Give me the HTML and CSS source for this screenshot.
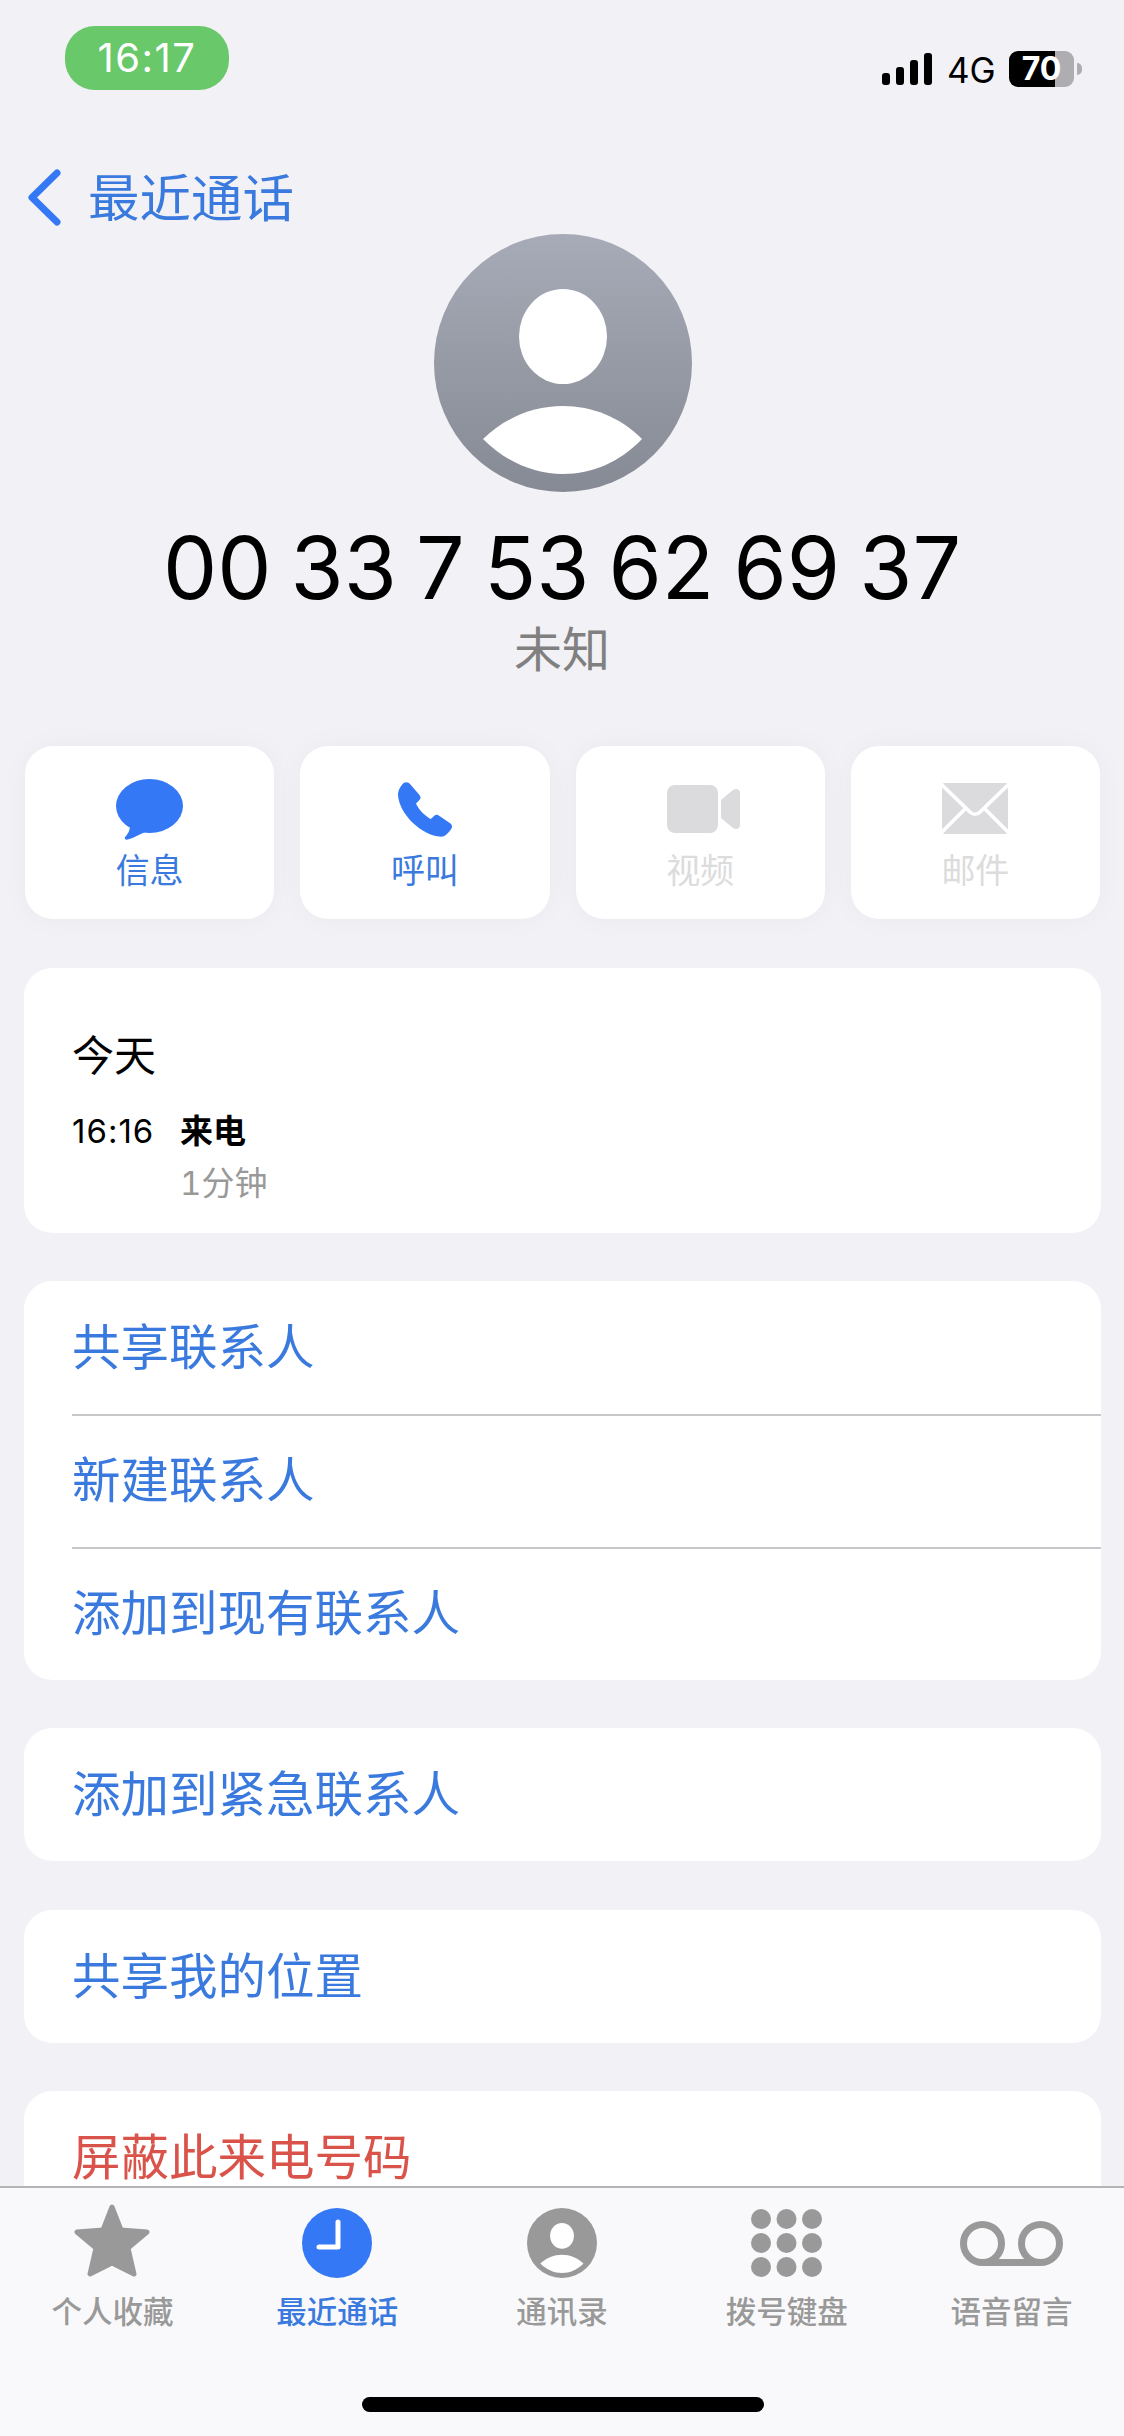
FILE: index.html
```html
<!DOCTYPE html>
<html lang="zh-CN">
<head>
<meta charset="utf-8">
<title>最近通话</title>
<link rel="stylesheet" href="styles.css">
</head>
<body>
<div class="screen">
  <header class="status">
    <div class="time-pill">16:17</div>
    <div class="status-right">
      <div class="signal"><i class="bar b1"></i><i class="bar b2"></i><i class="bar b3"></i><i class="bar b4"></i></div>
      <span class="net">4G</span>
      <div class="battery">70</div>
    </div>
  </header>
  <nav class="nav">
    <svg class="chevron" viewBox="0 0 34 57"><path d="M30 4 L5 28.5 L30 53" fill="none" stroke="#3478f6" stroke-width="7" stroke-linecap="round" stroke-linejoin="round"/></svg>
    <span class="nav-title">最近通话</span>
  </nav>
  <div class="avatar-wrap">
    <svg class="avatar" viewBox="0 0 258 258">
      <defs><linearGradient id="ag" x1="0" y1="0" x2="0" y2="1"><stop offset="0" stop-color="#a7abb7"/><stop offset="1" stop-color="#868a94"/></linearGradient></defs>
      <circle cx="129" cy="129" r="129" fill="url(#ag)"/>
      <ellipse cx="129" cy="102.5" rx="44" ry="47.5" fill="#fff"/>
      <path d="M49 205 C72 183 100 172 129 172 C158 172 186 183 208 205 C186 228 158 240 129 240 C100 240 72 228 49 205 Z" fill="#fff"/>
    </svg>
  </div>
  <h1 class="number">00 33 7 53 62 69 37</h1>
  <div class="sub">未知</div>
  <section class="actions">
    <div class="action">
      <svg class="ai ai-msg" viewBox="0 0 67 61"><ellipse cx="33.5" cy="27" rx="33.5" ry="27" fill="#3478f6"/><path d="M14 47 C14 52 11 56 9 58 C8 60 10 61 12 60.5 C18 59 24 55 31 52 Z" fill="#3478f6"/></svg>
      <span class="al">信息</span>
    </div>
    <div class="action">
      <svg class="ai ai-phone" viewBox="0 0 54 55"><path d="M6 .8 C8.5 -.5 10.5 .3 12 2 L21.5 13 C23 15 22.8 16.5 21 18.5 L18 21.5 C20 27 27 34 32.8 37 L36 34 C37.8 32.4 39.5 32.6 41.5 34 L52.5 41.5 C54.5 43.2 54.5 45.5 52.8 47.5 C50 51.5 47 54.7 43 54.7 C24 54 1 32 0 13 C0 8 3 3.5 6 .8 Z" fill="#3478f6"/></svg>
      <span class="al">呼叫</span>
    </div>
    <div class="action off">
      <svg class="ai ai-video" viewBox="0 0 73 48"><rect x="0" y="0" width="51" height="48" rx="8" fill="#dbdbdd"/><path d="M54 15 L66 5 C69 3 73 4 73 8 L73 40 C73 44 69 45 66 43 L54 33 Z" fill="#dbdbdd"/></svg>
      <span class="al">视频</span>
    </div>
    <div class="action off">
      <svg class="ai ai-mail" viewBox="0 0 66 51"><rect width="66" height="51" rx="3" fill="#dbdbdd"/><path d="M-1 1 L28 29 C31 32 35 32 38 29 L67 1 M-1 50 L23 26 M67 50 L43 26" fill="none" stroke="#fff" stroke-width="3.6"/></svg>
      <span class="al">邮件</span>
    </div>
  </section>
  <section class="card log">
    <div class="log-day">今天</div>
    <div class="log-row">
      <span class="log-time">16:16</span>
      <div class="log-info">
        <div class="log-type">来电</div>
        <div class="log-dur">1分钟</div>
      </div>
    </div>
  </section>
  <section class="card contact-list">
    <div class="row blue">共享联系人</div>
    <div class="row blue">新建联系人</div>
    <div class="row blue">添加到现有联系人</div>
  </section>
  <section class="card"><div class="row blue">添加到紧急联系人</div></section>
  <section class="card"><div class="row blue">共享我的位置</div></section>
  <section class="card"><div class="row red">屏蔽此来电号码</div></section>
  <footer class="tabbar">
    <div class="tabs">
      <div class="tab">
        <div class="ti"><svg class="star" viewBox="0 0 76 73"><path d="M38 3 L47 26 L73 28 L54 44 L60 70 L38 59 L16 70 L22 44 L3 28 L29 26 Z" fill="#999" stroke="#999" stroke-width="5" stroke-linejoin="round"/></svg></div>
        <span class="tl">个人收藏</span>
      </div>
      <div class="tab active">
        <div class="ti"><svg class="round" viewBox="0 0 70 70"><circle cx="35" cy="35" r="35" fill="#3478f6"/><path d="M36 14 L36 39 L17 39" fill="none" stroke="#fff" stroke-width="5" stroke-linecap="round" stroke-linejoin="round"/></svg></div>
        <span class="tl">最近通话</span>
      </div>
      <div class="tab">
        <div class="ti"><svg class="round" viewBox="0 0 258 258"><circle cx="129" cy="129" r="129" fill="#999"/><ellipse cx="129" cy="102.5" rx="44" ry="47.5" fill="#fff"/><path d="M49 205 C72 183 100 172 129 172 C158 172 186 183 208 205 C186 228 158 240 129 240 C100 240 72 228 49 205 Z" fill="#fff"/></svg></div>
        <span class="tl">通讯录</span>
      </div>
      <div class="tab">
        <div class="ti"><svg class="pad" viewBox="0 0 71 68" fill="#999"><ellipse cx="10" cy="10" rx="10" ry="10"/><ellipse cx="35.5" cy="10" rx="10" ry="10"/><ellipse cx="61" cy="10" rx="10" ry="10"/><ellipse cx="10" cy="34" rx="10" ry="10"/><ellipse cx="35.5" cy="34" rx="10" ry="10"/><ellipse cx="61" cy="34" rx="10" ry="10"/><ellipse cx="10" cy="58" rx="10" ry="10"/><ellipse cx="35.5" cy="58" rx="10" ry="10"/><ellipse cx="61" cy="58" rx="10" ry="10"/></svg></div>
        <span class="tl">拨号键盘</span>
      </div>
      <div class="tab">
        <div class="ti"><svg class="vm" viewBox="0 0 103 45" fill="none" stroke="#999" stroke-width="7"><circle cx="22.5" cy="22.5" r="19"/><circle cx="80.5" cy="22.5" r="19"/><path d="M22.5 41.5 H80.5"/></svg></div>
        <span class="tl">语音留言</span>
      </div>
    </div>
    <div class="home"></div>
  </footer>
</div>
</body>
</html>
```
FILE: styles.css
```css
* { box-sizing: border-box; }
html, body { margin: 0; padding: 0; }
body {
  background: #f1f1f6;
  font-family: Inter, "Noto Sans CJK SC", "Noto Sans", sans-serif;
  color: #000;
}
.screen {
  position: relative;
  width: 1124px;
  height: 2436px;
  overflow: hidden;
  background: #f1f1f6;
}
.status {
  display: flex;
  justify-content: space-between;
  align-items: flex-start;
  height: 90px;
  padding: 26px 50px 0 65px;
}
.time-pill {
  width: 164px;
  height: 64px;
  border-radius: 30px;
  background: #68c86a;
  color: #fff;
  font-size: 40px;
  line-height: 64px;
  text-align: center;
  letter-spacing: 1.5px;
}
.status-right {
  display: flex;
  align-items: center;
  margin-top: 25px;
  height: 36px;
}
.signal { display: flex; align-items: flex-end; gap: 5.5px; height: 32px; }
.bar { display: block; width: 8.5px; background: #000; border-radius: 3px; }
.b1 { height: 12px; }
.b2 { height: 18px; }
.b3 { height: 25px; }
.b4 { height: 32px; }
.net { font-size: 35px; line-height: 36px; margin: 1px 0 0 15px; width: 49px; }
.battery {
  position: relative;
  width: 65px;
  height: 36px;
  margin-left: 13px;
  border-radius: 9px;
  background: linear-gradient(90deg, #000 71%, #aeaeb2 71%);
  color: #fff;
  font-size: 32px;
  font-weight: 700;
  line-height: 36px;
  text-align: center;
}
.battery::after {
  content: "";
  position: absolute;
  right: -8px;
  top: 12px;
  width: 5px;
  height: 12px;
  border-radius: 0 6px 6px 0;
  background: #aeaeb2;
}
.nav {
  display: flex;
  align-items: center;
  height: 57px;
  margin-top: 79px;
  padding-left: 27px;
  gap: 27px;
}
.chevron { width: 34px; height: 57px; display: block; }
.nav-title { font-size: 51.5px; line-height: 57px; padding-top: 2px; color: #3a7ade; }
.avatar-wrap { display: flex; justify-content: center; margin-top: 8px; padding-left: 2px; }
.avatar { width: 258px; height: 258px; display: block; }
.number {
  margin: 24px 0 0;
  font-size: 86px;
  font-weight: 400;
  line-height: 104px;
  text-align: center;
  white-space: nowrap;
  word-spacing: -5px;
}
.sub {
  margin-top: 0;
  font-size: 48px;
  line-height: 60px;
  text-align: center;
  color: #808080;
}
.actions {
  display: flex;
  gap: 26px;
  margin: 66px 24px 0 25px;
}
.action {
  flex: 1;
  height: 173px;
  border-radius: 28px;
  background: #fff;
  box-shadow: 0 0 30px rgba(0, 0, 30, .035);
  display: flex;
  flex-direction: column;
  align-items: center;
  color: #3a7ade;
}
.action.off { color: #dcdcdc; }
.ai { display: block; }
.ai-msg { width: 67px; height: 61px; margin-top: 33px; margin-bottom: 3px; }
.ai-phone { width: 54px; height: 55px; margin-top: 36px; margin-bottom: 6px; }
.ai-video { width: 73px; height: 48px; margin: 39px 0 10px 7px; }
.ai-mail { width: 66px; height: 51px; margin-top: 37px; margin-bottom: 9px; }
.al { font-size: 34px; line-height: 44px; margin-top: 6px; }
.card {
  margin: 48.5px 23px 0 24px;
  border-radius: 28px;
  background: #fff;
  overflow: hidden;
}
.contact-list { margin-top: 47.5px; }
.log { height: 265px; margin-top: 49px; padding: 64px 0 0 48px; }
.log-day { font-size: 42px; line-height: 48px; }
.log-row { display: flex; margin-top: 27px; }
.log-time { width: 108px; font-size: 33px; line-height: 48px; letter-spacing: 1px; }
.log-type { font-size: 33px; line-height: 48px; font-weight: 700; }
.log-dur { font-size: 33px; line-height: 48px; margin-top: 4px; color: #999; font-variant-numeric: tabular-nums; }
.row {
  position: relative;
  height: 133px;
  margin-left: 48px;
  font-size: 48.5px;
  line-height: 134px;
  white-space: nowrap;
}
.row + .row { border-top: 2px solid #c8c8ca; line-height: 130px; }
.blue { color: #3a7ade; }
.red { color: #d9534a; }
.tabbar {
  position: absolute;
  left: 0;
  right: 0;
  bottom: 0;
  height: 250px;
  background: #f9f9fb;
  border-top: 2px solid #b4b4b6;
}
.tabs { display: flex; }
.tab {
  flex: 1;
  display: flex;
  flex-direction: column;
  align-items: center;
}
.ti {
  height: 92px;
  display: flex;
  align-items: center;
  justify-content: center;
  margin-top: 9px;
}
.star { width: 76px; height: 73px; display: block; margin-top: -5px; }
.round { width: 70px; height: 70px; display: block; }
.pad { width: 71px; height: 68px; display: block; }
.vm { width: 103px; height: 45px; display: block; }
.tl {
  font-size: 30.5px;
  line-height: 40px;
  margin-top: 3px;
  color: #999;
  font-weight: 500;
}
.active .tl { color: #3a7ade; }
.home {
  position: absolute;
  left: 362px;
  top: 209px;
  width: 402px;
  height: 15px;
  border-radius: 8px;
  background: #000;
}
```
